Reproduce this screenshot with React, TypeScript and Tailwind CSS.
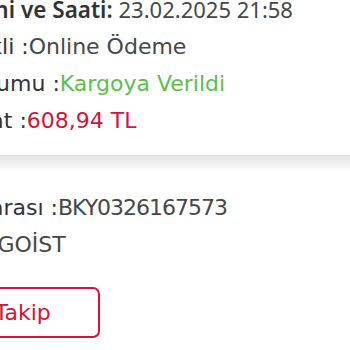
const Row = ({ label, value, valueClass = "text-[#474747]" }: { label: string; value: string; valueClass?: string }) => (
  <p className="whitespace-nowrap">
    <span className="text-[#333]">{label}</span>
    <span className={valueClass}>{value}</span>
  </p>
);

const App = () => {
  return (
    <div className="w-[350px] h-[350px] overflow-hidden bg-white font-['DejaVu_Sans',sans-serif] text-[22px] leading-[37px]">
      <div className="-ml-[125px] -mt-[9px] w-[475px]">
        <p className="whitespace-nowrap font-['Noto_Sans',sans-serif]">
          <span className="font-semibold text-[22.5px] text-[#333]">Sipariş Tarihi ve Saati: </span>
          <span className="text-[#474747]">23.02.2025 21:58</span>
        </p>
        <Row label="Ödeme Şekli :" value="Online Ödeme" />
        <Row label="Sipariş Durumu :" value="Kargoya Verildi" valueClass="text-[#5cc04b]" />
        <Row label="Toplam Fiyat :" value="608,94 TL" valueClass="text-[#d3143c]" />
      </div>

      <div className="mt-[16px] h-[17px] bg-gradient-to-b from-[#e2e2e2] via-[#efefef] to-white" />

      <div className="-ml-[125px] mt-[17px] w-[475px]">
        <Row label="Takip Numarası :" value="BKY0326167573" valueClass="text-[#474747] tracking-[-1px]" />
        <Row label="Kargo :" value="KARGOİST" />
        <button className="mt-[24px] h-[51px] w-[225px] border-2 border-[#d3143c] rounded-[7px] text-[#d3143c] leading-none">
          Kargo Takip
        </button>
      </div>
    </div>
  );
};

export default App;
